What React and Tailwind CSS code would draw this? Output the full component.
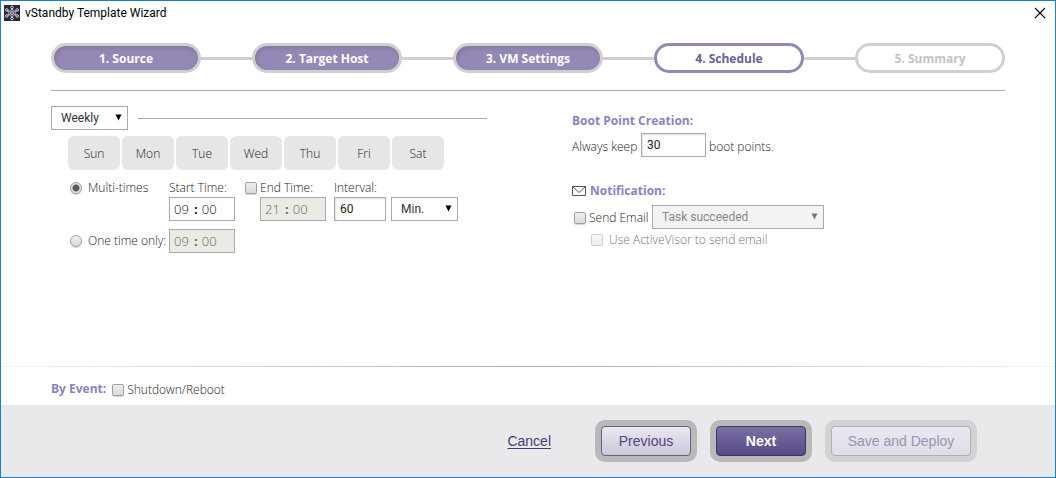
import React from 'react';

const steps = [
    { label: '1. Source', state: 'done' },
    { label: '2. Target Host', state: 'done' },
    { label: '3. VM Settings', state: 'done' },
    { label: '4. Schedule', state: 'current' },
    { label: '5. Summary', state: 'pending' },
];

const days = ['Sun', 'Mon', 'Tue', 'Wed', 'Thu', 'Fri', 'Sat'];

const getStepStyle = (state) => {
    switch (state) {
        case 'done':
            return 'bg-[#9488b7] border-[#d0d0d0] text-white shadow-[inset_1px_2px_4px_#82759f]';
        case 'current':
            return 'bg-white border-[#9488b7] text-[#6a5f9c]';
        case 'pending':
        default:
            return 'bg-white border-[#d0d0d0] text-[#c3c3c3]';
    }
};

const checkboxStyle = 'appearance-none shrink-0 w-3 h-3 rounded-xs border border-[#a0a0a0] bg-linear-to-b from-[#efefef] to-[#d9d9d9] shadow-[0_1px_1px_#d4d4d4] checked:bg-[#9488b7] disabled:border-[#cfcfcf] disabled:from-[#f6f6f6] disabled:to-[#eeeeee] disabled:shadow-none';
const radioStyle = 'appearance-none shrink-0 w-3 h-3 rounded-full border border-[#a0a0a0] bg-linear-to-b from-[#efefef] to-[#d9d9d9] shadow-[0_1px_1px_#d4d4d4] checked:bg-[radial-gradient(circle,#5c5c5c_0_3px,#e6e6e6_4px)]';
const numberStyle = 'h-6 border border-[#aaaaaa] bg-white px-[5px] font-[Roboto,sans-serif] font-normal text-xs text-[#222222] shadow-[inset_1px_1px_2px_#dddddd]';
const headingStyle = 'text-xs leading-4 font-bold text-[#9080c4]';

const AppIcon = () => (
    <svg className="w-4 h-4" viewBox="0 0 16 16" fill="none" stroke="#e4e2ee">
        <rect width="16" height="16" fill="#2b2740" stroke="none" />
        <g strokeWidth="0.8">
            <path d="M8 3.500L6.300 6.500L3.500 5.600M8 3.500L9.700 6.500L12.500 5.600M8 12.500L6.300 9.500L3.500 10.400M8 12.500L9.700 9.500L12.500 10.400" />
            <path d="M3.500 5.600L5.200 8L3.500 10.400M12.500 5.600L10.800 8L12.500 10.400" />
        </g>
        <g fill="#2b2740" strokeWidth="0.9">
            <circle cx="8" cy="2.500" r="1.300" />
            <circle cx="8" cy="13.500" r="1.300" />
            <circle cx="2.800" cy="5" r="1.300" />
            <circle cx="13.200" cy="5" r="1.300" />
            <circle cx="2.800" cy="11" r="1.300" />
            <circle cx="13.200" cy="11" r="1.300" />
            <circle cx="8" cy="8" r="1.400" />
        </g>
    </svg>
);

const Dropdown = ({ label, options, className, disabled }) => (
    <div className={`relative h-6 ${className}`}>
        <select
            aria-label={label}
            disabled={disabled}
            className="appearance-none w-full h-full border border-[#aaaaaa] bg-white pl-[9px] pr-5 font-[Roboto,sans-serif] font-normal text-xs text-[#333333] disabled:bg-[#f3f3f3] disabled:text-[#888888] disabled:opacity-100"
        >
            {options.map((option) => (
                <option key={option}>{option}</option>
            ))}
        </select>
        <svg
            className={`pointer-events-none absolute right-1.5 top-2 w-[7px] h-[7px] ${disabled ? 'text-[#777777]' : 'text-black'}`}
            viewBox="0 0 7 7"
            fill="currentColor"
        >
            <path d="M0.5 0.5h6L3.5 6.5z" />
        </svg>
    </div>
);

const TimeField = ({ label, hours, minutes, disabled }) => (
    <div
        role="group"
        aria-label={label}
        className={`flex items-center gap-1 w-[66px] h-6 border border-[#aaaaaa] pl-1 text-[13px] leading-4 ${disabled ? 'bg-[#ebebe4] text-[#666666]' : 'bg-white text-[#111111]'}`}
    >
        <input aria-label={`${label} hours`} defaultValue={hours} disabled={disabled} className="w-4" />
        <span className="font-bold">:</span>
        <input aria-label={`${label} minutes`} defaultValue={minutes} disabled={disabled} className="w-4" />
    </div>
);

const Schedule = () => (
    <section className="w-[436px]">
        <div className="flex items-center gap-2.5">
            <Dropdown label="Frequency" options={['Weekly', 'Daily', 'Monthly']} className="w-[77px]" />
            <hr className="flex-1 border-[#aaaaaa]" />
        </div>

        <div className="flex gap-0.5 mt-1.5 pl-[17px]">
            {days.map((day) => (
                <button key={day} type="button" className="w-[52px] h-[34px] rounded-md bg-[#e6e6e6] pt-0.5 text-xs text-[#222222]">
                    {day}
                </button>
            ))}
        </div>

        <div className="flex items-start mt-2 pl-[19px]">
            <label className="flex items-center gap-1.5 w-[99px] h-[19px]">
                <input type="radio" name="mode" defaultChecked className={radioStyle} />
                Multi-times
            </label>
            <div className="w-[76px]">
                <p className="h-[19px] leading-[19px]">Start Time:</p>
                <TimeField label="Start Time" hours="09" minutes="00" />
            </div>
            <div className="w-[89px]">
                <label className="flex items-center gap-[3px] h-[19px]">
                    <input type="checkbox" className={checkboxStyle} />
                    End Time:
                </label>
                <div className="pl-[15px]">
                    <TimeField label="End Time" hours="21" minutes="00" disabled />
                </div>
            </div>
            <div>
                <label htmlFor="interval" className="block h-[19px] leading-[19px]">Interval:</label>
                <div className="flex gap-[5px]">
                    <input id="interval" defaultValue="60" className={`w-[52px] ${numberStyle}`} />
                    <Dropdown label="Interval unit" options={['Min.', 'Hour']} className="w-[67px]" />
                </div>
            </div>
        </div>

        <div className="flex items-center mt-2 pl-[19px]">
            <label className="flex items-center gap-1.5 w-[99px] whitespace-nowrap">
                <input type="radio" name="mode" className={radioStyle} />
                One time only:
            </label>
            <TimeField label="One time only" hours="09" minutes="00" disabled />
        </div>
    </section>
);

const Options = () => (
    <section className="flex-1 pt-[7px]">
        <h2 className={headingStyle}>Boot Point Creation:</h2>
        <div className="flex items-center gap-[3px] mt-1">
            <label htmlFor="keep" className="w-[66px] pt-1 whitespace-nowrap">Always keep</label>
            <input id="keep" defaultValue="30" className={`w-[65px] ${numberStyle}`} />
            <span className="pt-1">boot points.</span>
        </div>

        <h2 className={`flex items-center gap-1 mt-[26px] ${headingStyle}`}>
            <svg className="w-3.5 h-2.5" viewBox="0 0 14 10" fill="none" stroke="#555555">
                <path d="M0.5 0.5h13v9h-13zM0.5 0.5L7 6.5l6.500-6" />
            </svg>
            Notification:
        </h2>
        <div className="flex items-center mt-1.5">
            <label className="flex items-center gap-[3px] w-20 pt-0.5 pl-0.5 whitespace-nowrap">
                <input type="checkbox" className={checkboxStyle} />
                Send Email
            </label>
            <Dropdown label="Email condition" options={['Task succeeded', 'Task failed']} className="w-[172px]" disabled />
        </div>
        <label className="flex items-center gap-1.5 mt-[3px] pl-[19px] text-[#777777]">
            <input type="checkbox" disabled className={checkboxStyle} />
            Use ActiveVisor to send email
        </label>
    </section>
);

const App = () => {
    return (
        <div className="flex flex-col min-h-screen border border-[#1a80d2] bg-white font-[Open_Sans,sans-serif] text-xs leading-4 font-light text-[#222222]">
            <header className="flex items-center gap-[5px] h-6 pl-[3px] pr-[9px] font-[Roboto,sans-serif] font-normal text-black">
                <AppIcon />
                <h1 className="flex-1">vStandby Template Wizard</h1>
                <button type="button" aria-label="Close">
                    <svg className="w-3 h-3" viewBox="0 0 12 12" stroke="#000000" strokeWidth="1.1">
                        <path d="M1 1l10 10M11 1L1 11" />
                    </svg>
                </button>
            </header>

            <main className="flex-1 flex flex-col">
                <div className="flex-1 px-[50px] pt-[18px]">
                    <ol className="flex items-center pb-[17px] border-b border-[#aaaaaa]">
                        {steps.map((step, index) => (
                            <React.Fragment key={step.label}>
                                {index > 0 && <li aria-hidden="true" className="flex-1 h-[3px] bg-[#d0d0d0]" />}
                                <li className={`flex items-center justify-center w-[150px] h-[30px] rounded-full border-3 pt-0.5 font-bold ${getStepStyle(step.state)}`}>
                                    {step.label}
                                </li>
                            </React.Fragment>
                        ))}
                    </ol>

                    <div className="flex gap-[85px] pt-[15px]">
                        <Schedule />
                        <Options />
                    </div>
                </div>

                <div className="h-px bg-linear-to-r from-[#f4f4f4] via-[#b0b0b0] to-[#f4f4f4]" />
                <div className="flex items-center gap-1.5 h-[38px] px-[50px] pt-1.5">
                    <h2 className={headingStyle}>By Event:</h2>
                    <label className="flex items-center gap-[3px] pt-0.5">
                        <input type="checkbox" className={checkboxStyle} />
                        Shutdown/Reboot
                    </label>
                </div>
            </main>

            <footer className="flex items-center justify-end h-[72px] pr-[78px] bg-[#e9e9eb] font-[Liberation_Sans,sans-serif] text-sm font-normal">
                <a href="#cancel" className="mr-11 text-[#4b3a78] underline underline-offset-2">Cancel</a>
                <div className="flex gap-[13px]">
                    <div className="rounded-[10px] bg-[#b9b9ba] p-1.5">
                        <button type="button" className="w-[90px] h-[30px] rounded-sm border border-[#6a5f8c] bg-linear-to-b from-[#ebe8f2] to-[#cbc7d9] text-[#54457f]">
                            Previous
                        </button>
                    </div>
                    <div className="rounded-[10px] bg-[#b9b9ba] p-1.5">
                        <button type="button" className="w-[90px] h-[30px] rounded-sm border border-[#44306f] bg-linear-to-b from-[#7a70a5] to-[#594a85] font-bold text-white">
                            Next
                        </button>
                    </div>
                    <div className="rounded-[10px] bg-[#d2d2d3] p-1.5">
                        <button type="button" disabled className="w-[140px] h-[30px] rounded-sm border border-[#b0abc0] bg-linear-to-b from-[#eae8ef] to-[#dfdde6] text-[#9c93b5]">
                            Save and Deploy
                        </button>
                    </div>
                </div>
            </footer>
        </div>
    );
};

export default App;
